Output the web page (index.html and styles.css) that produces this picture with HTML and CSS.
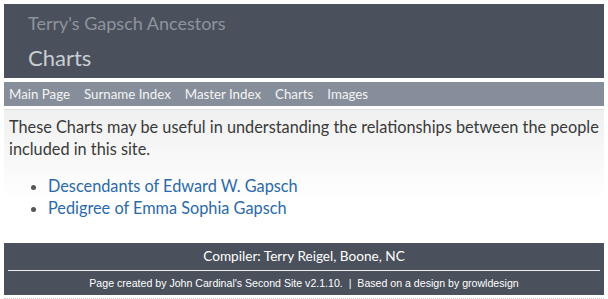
FILE: index.html
```html
<!DOCTYPE html>
<html lang="en">
<head>
    <meta charset="UTF-8">
    <title>Charts</title>
    <link rel="stylesheet" href="styles.css">
</head>
<body>
    <div class="page">
        <div class="header">
            <div class="site-title">Terry's Gapsch Ancestors</div>
            <h1>Charts</h1>
        </div>
        <div class="menu">
            <a href="#">Main Page</a>
            <a href="#">Surname Index</a>
            <a href="#">Master Index</a>
            <a href="#">Charts</a>
            <a href="#">Images</a>
        </div>
        <div class="content">
            <p>These Charts may be useful in understanding the relationships between the people included in this site.</p>
            <ul>
                <li><a href="#">Descendants of Edward W. Gapsch</a></li>
                <li><a href="#">Pedigree of Emma Sophia Gapsch</a></li>
            </ul>
        </div>
        <div class="footer">
            <div class="compiler">Compiler: Terry Reigel, Boone, NC</div>
            <div class="credit">Page created by John Cardinal's Second Site v2.1.10. &nbsp;|&nbsp; Based on a design by growldesign</div>
        </div>
    </div>
</body>
</html>
```

FILE: styles.css
```css
body {
    margin: 0;
    padding: 4px 4px 0 4px;
    background: #fff;
    font-family: Lato, "Liberation Sans", sans-serif;
}
.page {
    width: 600px;
    border-bottom: 1px dotted #c8c8c8;
    padding-bottom: 3px;
}
.header {
    height: 74px;
    box-sizing: border-box;
    background: #4a515c;
    padding: 9px 0 0 24px;
}
.site-title {
    color: #8e949c;
    font-size: 18px;
    line-height: 21px;
}
.header h1 {
    margin: 11px 0 0 0;
    color: #c9cdd3;
    font-size: 22px;
    font-weight: normal;
    line-height: 26px;
}
.menu {
    margin-top: 4px;
    height: 24px;
    background: #868e9b;
    display: flex;
    gap: 14px;
    padding: 0 5px;
    align-items: center;
}
.menu a {
    color: #f4f4f4;
    text-decoration: none;
    font-size: 13.3px;
}
.content {
    margin-top: 3px;
    border-top: 1px solid #dedede;
    background: linear-gradient(#f0f0f0, #fff 90px);
    padding: 6px 5px 24px 5px;
    color: #3a3a3a;
    font-size: 16.3px;
    line-height: 22px;
}
.content p {
    margin: 0 0 15px 0;
}
.content ul {
    margin: 0;
    padding-left: 39px;
    line-height: 22px;
}
.content li::marker {
    color: #555;
}
.content a {
    color: #2a6aa8;
    text-decoration: none;
}
.footer {
    background: #4a515c;
    color: #fff;
    text-align: center;
    height: 52px;
    box-sizing: border-box;
    padding: 0 4px;
}
.compiler {
    font-size: 13.6px;
    line-height: 27px;
    border-bottom: 1px solid #f0f0f0;
}
.credit {
    font-family: "Liberation Sans", Arial, sans-serif;
    font-size: 10.6px;
    line-height: 24px;
}
```
